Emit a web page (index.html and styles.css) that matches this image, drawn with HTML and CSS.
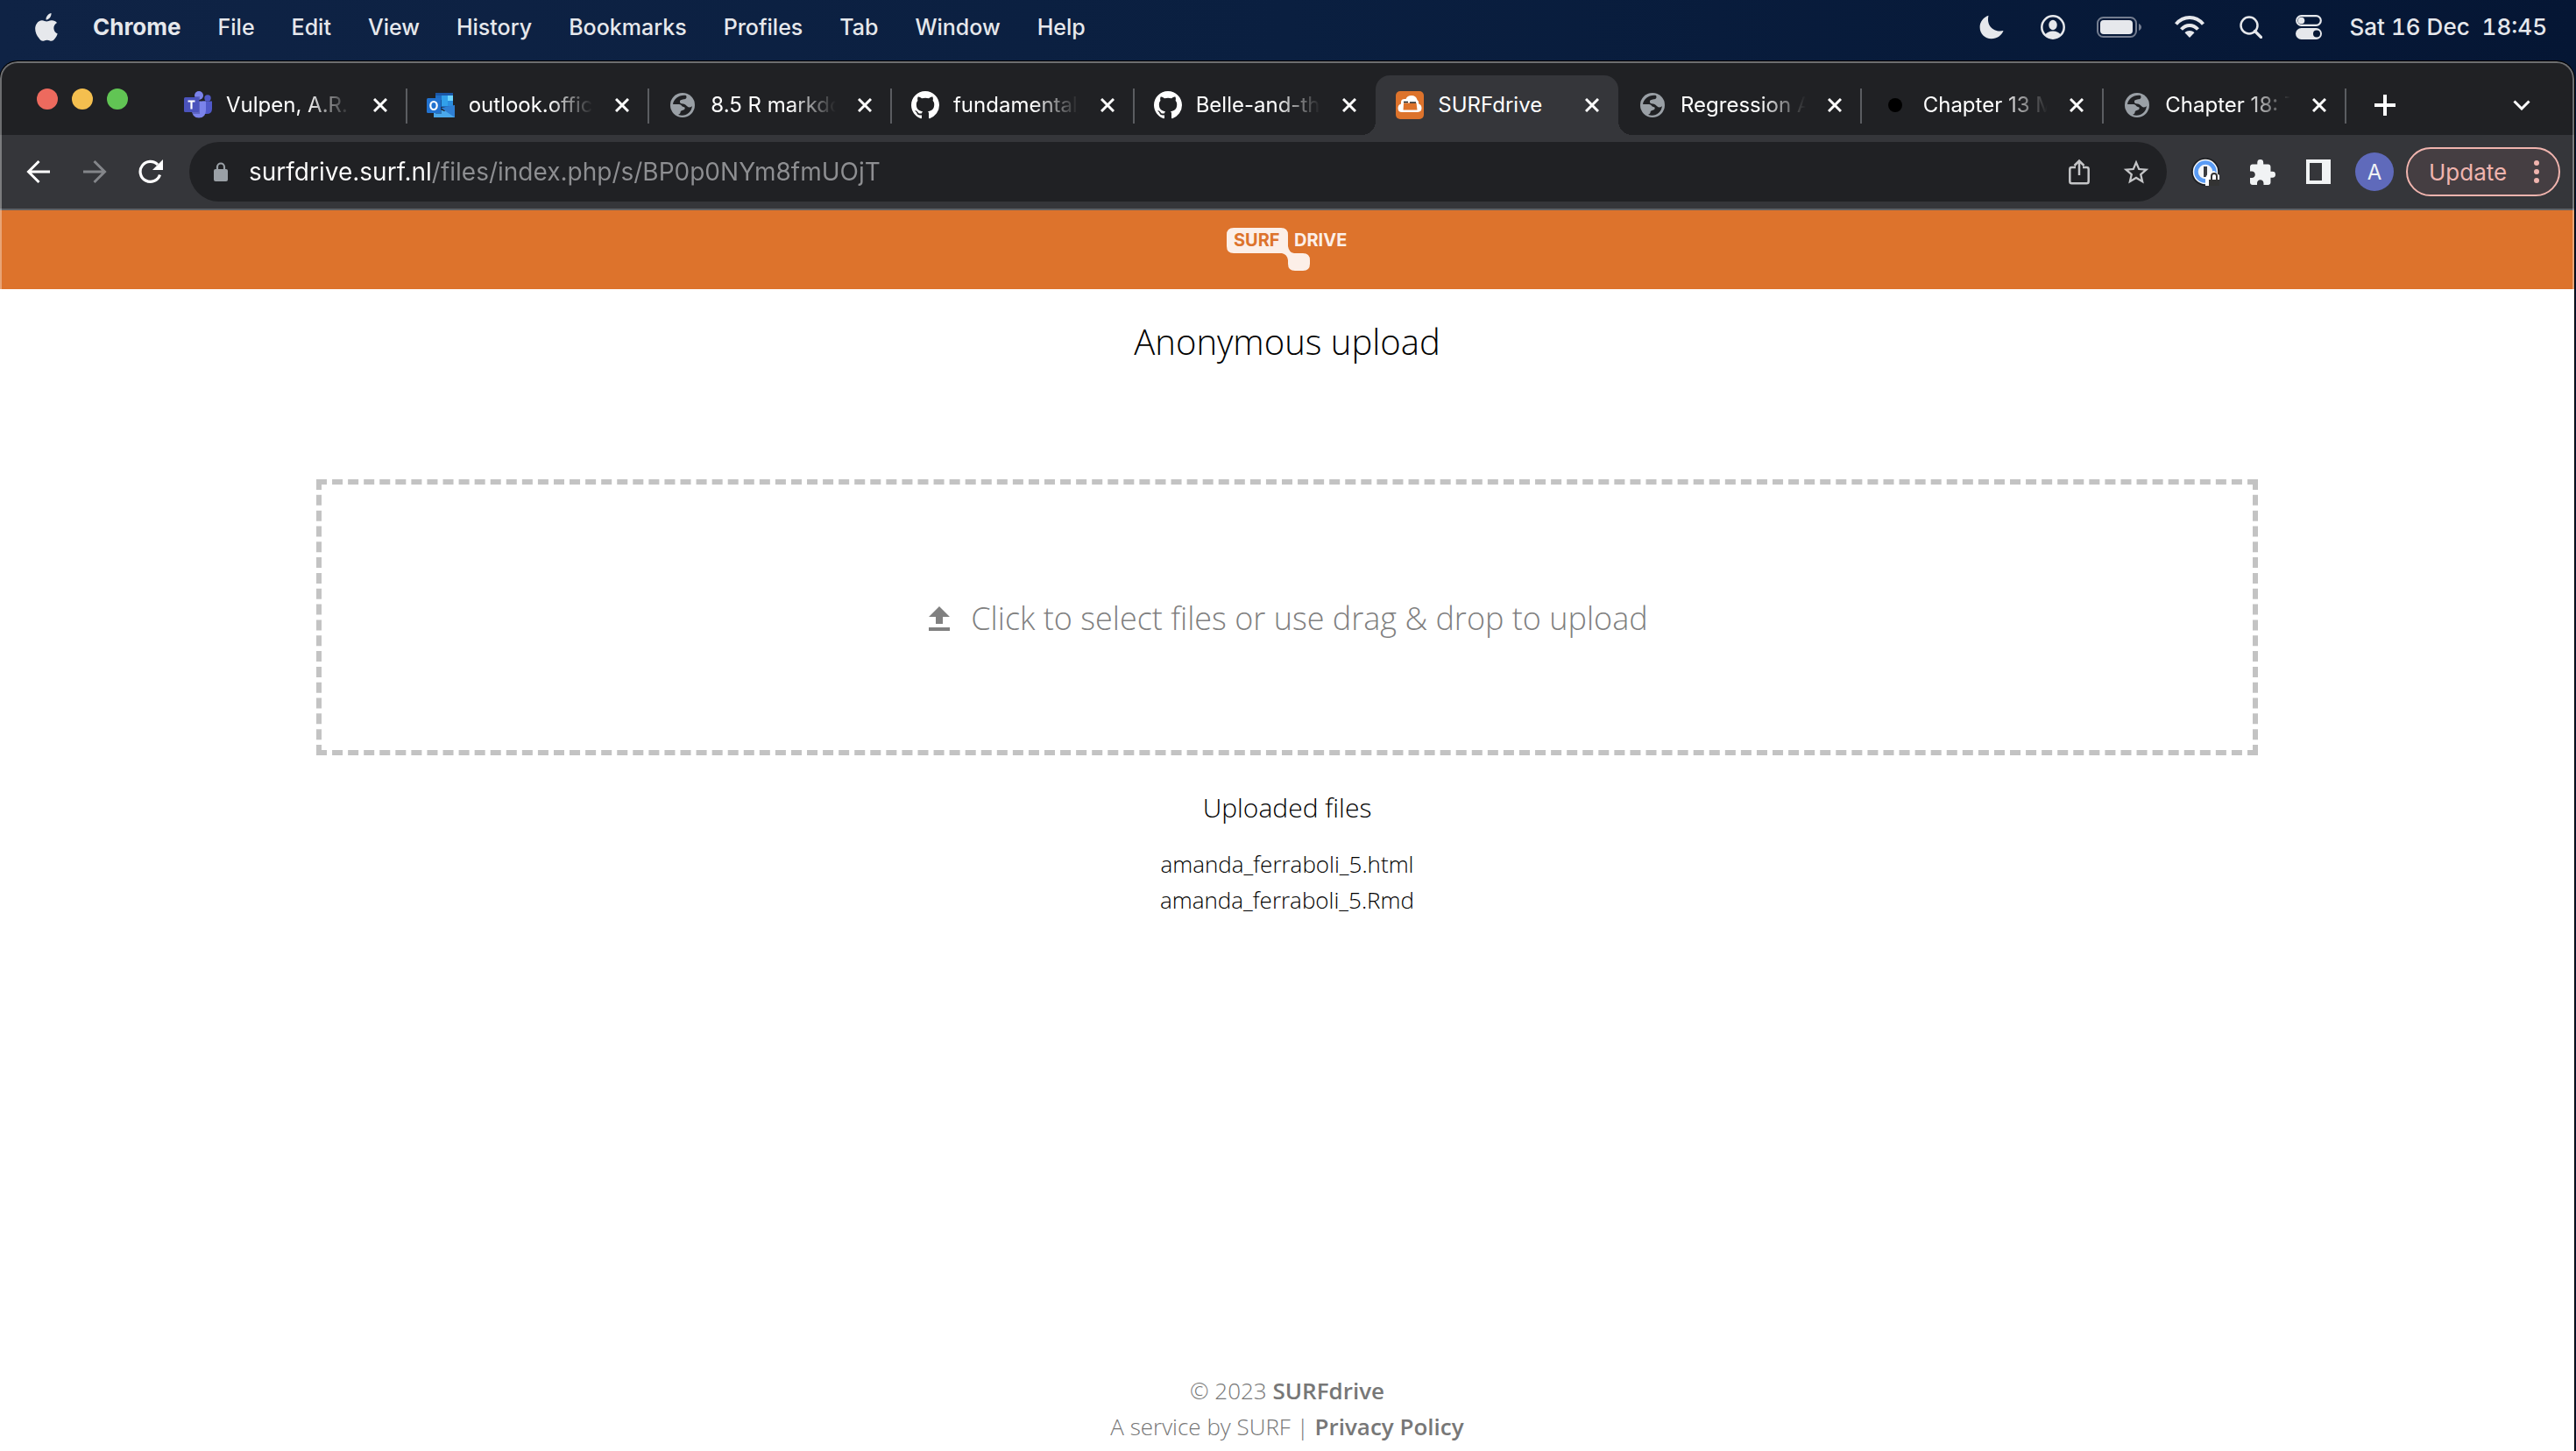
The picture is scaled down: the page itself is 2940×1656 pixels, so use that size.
FILE: index.html
```html
<!DOCTYPE html>
<html lang="en">
<head>
<meta charset="utf-8">
<title>SURFdrive</title>
<link rel="stylesheet" href="styles.css">
</head>
<body>
<svg class="sprite" width="0" height="0" aria-hidden="true">
  <symbol id="close" viewBox="0 0 16 16"><path d="M1 1l14 14M15 1L1 15" stroke="currentColor" stroke-width="3" fill="none"/></symbol>
  <symbol id="globe" viewBox="0 0 28 28"><circle cx="14" cy="14" r="14" fill="#9aa0a6"/><path fill="#202124" d="M18 3C10 2 4 7 3 13h7c3 0 3 3 5 3 2.500 0 2 3 0 3.500-2 .5-3.500 1-3.500 3-.2 1.500-1.500 1.500-2.500 2.500 8 2.500 15-2 16-10-1 1.500-4 2-5.500.5s-3-3-5-3c-2.500 0-4-1-3.500-3S15 7.500 17 7c1.500-.5 2-2.500 1-4z"/></symbol>
  <symbol id="github" viewBox="0 0 16 16"><path fill="#fff" d="M8 0C3.58 0 0 3.58 0 8c0 3.540 2.290 6.530 5.470 7.590.4.070.55-.17.55-.38 0-.19-.01-.82-.01-1.490-2.010.37-2.530-.49-2.690-.94-.09-.23-.48-.94-.82-1.130-.28-.15-.68-.52-.01-.53.63-.01 1.080.58 1.230.82.72 1.210 1.870.87 2.330.66.070-.52.28-.87.51-1.070-1.780-.2-3.640-.89-3.640-3.950 0-.87.31-1.590.82-2.150-.08-.2-.36-1.020.08-2.120 0 0 .67-.21 2.200.82.64-.18 1.320-.27 2-.27s1.360.09 2 .27c1.530-1.040 2.200-.82 2.200-.82.44 1.100.16 1.920.08 2.120.51.56.82 1.270.82 2.150 0 3.070-1.870 3.750-3.650 3.950.29.25.54.73.54 1.480 0 1.070-.01 1.930-.01 2.200 0 .21.15.46.55.38A8.010 8.010 0 0 0 16 8c0-4.420-3.580-8-8-8z"/></symbol>
</svg>

<header class="menubar">
  <svg class="apple" viewBox="0 0 26 32" width="26" height="32"><path fill="currentColor" d="M18.500 0c.2 2.200-.6 4-1.800 5.400-1.200 1.300-2.700 2.200-4.200 2.100-.2-2 .7-3.900 1.800-5.100C15.500 1 17.100.2 18.500 0zM25 11c-2.700 1.700-3.800 4-3.600 6.500.2 2.900 1.800 4.900 4.300 6-.7 2-1.700 3.900-3 5.600-1.100 1.500-2.300 2.700-4.100 2.700-1.900 0-2.500-1.100-4.900-1.100-2.300 0-3.100 1.100-4.900 1.100-1.700 0-3-1.300-4.200-3C.1 23.500-1.300 16.300 1.900 11.900 3.400 9.600 5.700 8.300 8 8.300c2.100 0 3.700 1.300 5.200 1.300 1.400 0 3.300-1.500 6-1.300 2.300.1 4.500 1.100 5.800 2.700z"/></svg>
  <nav class="menus">
    <button class="menu menu-app">Chrome</button>
    <button class="menu">File</button>
    <button class="menu">Edit</button>
    <button class="menu">View</button>
    <button class="menu">History</button>
    <button class="menu">Bookmarks</button>
    <button class="menu">Profiles</button>
    <button class="menu">Tab</button>
    <button class="menu">Window</button>
    <button class="menu">Help</button>
  </nav>
  <div class="status">
    <svg class="moon" viewBox="0 0 28 28" width="28" height="28"><path fill="currentColor" d="M10.500.8C5 2.600.6 7.700.6 14c0 7.400 5.800 13.300 13.200 13.300 6.300 0 11.700-3.600 13.700-9.200-9.900 2.500-20-4.800-17-17.300z"/></svg>
    <svg class="person" viewBox="0 0 28 28" width="28" height="28"><circle cx="14" cy="14" r="12.700" fill="none" stroke="currentColor" stroke-width="2.500"/><ellipse cx="14" cy="11.500" rx="4.700" ry="5.700" fill="currentColor"/><path fill="currentColor" d="M5 23c1.500-3 5-4.500 9-4.500s7.500 1.500 9 4.500c-5 5-13 5-18 0z"/></svg>
    <svg class="battery" viewBox="0 0 52 24" width="52" height="24"><rect x="1" y="1" width="44" height="22" rx="6.500" fill="none" stroke="#747d90" stroke-width="2"/><rect x="4" y="4" width="37" height="16" rx="4" fill="currentColor"/><path d="M48 8c4 1.500 4 6.500 0 8z" fill="#747d90"/></svg>
    <svg class="wifi" viewBox="0 0 34 26" width="34" height="26"><path fill="none" stroke="currentColor" stroke-width="4" d="M1.500 9.500C10-.5 24-.5 32.500 9.500M7.500 15.500c5.500-6 13.500-6 19 0"/><path fill="currentColor" d="M17 25l-5.500-5.700c3-3 8-3 11 0z"/></svg>
    <svg class="search" viewBox="0 0 26 26" width="26" height="26"><circle cx="11" cy="11" r="9.500" fill="none" stroke="currentColor" stroke-width="2.500"/><path d="M17.500 17.500l7 7" stroke="currentColor" stroke-width="3.200" stroke-linecap="round"/></svg>
    <svg class="control" viewBox="0 0 30 28" width="30" height="28"><rect x="1.200" y="1.200" width="27.600" height="10.600" rx="5.300" fill="none" stroke="currentColor" stroke-width="2.200"/><circle cx="6.500" cy="6.500" r="3.800" fill="currentColor"/><rect y="15" width="30" height="13" rx="6.500" fill="currentColor"/><circle cx="24" cy="21.500" r="4" fill="#061734"/></svg>
    <time class="clock">Sat 16 Dec&nbsp; 18:45</time>
  </div>
</header>

<div class="window">
  <div class="tabstrip">
    <div class="lights"><button class="light red" aria-label="Close window"></button><button class="light yellow" aria-label="Minimise"></button><button class="light green" aria-label="Zoom"></button></div>
    <div class="tabs">
      <div class="tab">
        <svg class="favicon" viewBox="0 0 32 32"><circle cx="27" cy="8" r="3.700" fill="#5059c9"/><path d="M21 11.500h11v8.500q0 6-6 6h-5z" fill="#5059c9"/><circle cx="17" cy="5" r="5" fill="#7b83eb"/><path d="M9 11.500h16v10q0 9-8 9t-8-9z" fill="#7b83eb"/><path d="M12 6h6v20h-8z" fill="#3b4093" opacity=".45"/><rect y="7" width="17" height="17" rx="1.500" fill="#4b53bc"/><path d="M4.500 11.500h8M8.500 11v9.500" stroke="#fff" stroke-width="2.200"/></svg>
        <button class="tab-title">Vulpen, A.R.</button>
        <button class="tab-close" aria-label="Close tab"><svg class="close-icon"><use href="#close"/></svg></button>
      </div>
      <div class="tab">
        <svg class="favicon" viewBox="0 0 32 32"><path d="M10 2h20v16H10z" fill="#1f6fc5"/><path d="M10 2h20v3H10z" fill="#1a57a8"/><path d="M17 5h7v6h-7zM17 11h7v6h-7z" fill="#32a0ea"/><path d="M24 5h6v6h-6z" fill="#6cd4ff"/><path d="M24 11h6v6h-6z" fill="#2b8ee0"/><path d="M8 30V17l12 6 12-7v14z" fill="#4aa8ea"/><path d="M16 19l16 11V16z" fill="#2f7fd4"/><path d="M10 26h7V10h-3" fill="#123f78" opacity=".5"/><rect y="8" width="16" height="17" rx="1.500" fill="#2272cf"/><ellipse cx="8" cy="16.500" rx="3.700" ry="4.500" fill="none" stroke="#fff" stroke-width="2.200"/></svg>
        <button class="tab-title">outlook.offic</button>
        <button class="tab-close" aria-label="Close tab"><svg class="close-icon"><use href="#close"/></svg></button>
      </div>
      <div class="tab">
        <svg class="favicon globe"><use href="#globe"/></svg>
        <button class="tab-title">8.5 R markdo</button>
        <button class="tab-close" aria-label="Close tab"><svg class="close-icon"><use href="#close"/></svg></button>
      </div>
      <div class="tab">
        <svg class="favicon"><use href="#github"/></svg>
        <button class="tab-title">fundamental_</button>
        <button class="tab-close" aria-label="Close tab"><svg class="close-icon"><use href="#close"/></svg></button>
      </div>
      <div class="tab no-rule">
        <svg class="favicon"><use href="#github"/></svg>
        <button class="tab-title">Belle-and-th</button>
        <button class="tab-close" aria-label="Close tab"><svg class="close-icon"><use href="#close"/></svg></button>
      </div>
      <div class="tab active no-rule">
        <svg class="favicon" viewBox="0 0 32 32"><rect width="32" height="32" rx="5" fill="#dd732c"/><path fill="#fff" d="M7 24q-4.500 0-4.500-4.500 0-4 3.500-5v-2.200q.3-3.500 4.500-3.300h1q1.500-4 6.500-4t6.500 5q2 1 1.700 4.500 3.300 1 3.300 5T25 24z"/><path fill="#dd732c" d="M9 13.500h14.500l1 8h-16z"/><path d="M9 12.500h5M16 13h7" stroke="#222" stroke-width="1.300"/></svg>
        <button class="tab-title">SURFdrive</button>
        <button class="tab-close" aria-label="Close tab"><svg class="close-icon"><use href="#close"/></svg></button>
      </div>
      <div class="tab">
        <svg class="favicon globe"><use href="#globe"/></svg>
        <button class="tab-title">Regression A</button>
        <button class="tab-close" aria-label="Close tab"><svg class="close-icon"><use href="#close"/></svg></button>
      </div>
      <div class="tab">
        <svg class="favicon" viewBox="0 0 32 32"><circle cx="16" cy="16" r="8" fill="#000"/></svg>
        <button class="tab-title">Chapter 13 M</button>
        <button class="tab-close" aria-label="Close tab"><svg class="close-icon"><use href="#close"/></svg></button>
      </div>
      <div class="tab">
        <svg class="favicon globe"><use href="#globe"/></svg>
        <button class="tab-title">Chapter 18: T</button>
        <button class="tab-close" aria-label="Close tab"><svg class="close-icon"><use href="#close"/></svg></button>
      </div>
    </div>
    <div class="strip-end">
      <button aria-label="New tab"><svg width="24" height="24" viewBox="0 0 24 24"><path d="M12 0v24M0 12h24" stroke="currentColor" stroke-width="4"/></svg></button>
      <button aria-label="Search tabs"><svg width="20" height="12" viewBox="0 0 20 12"><path d="M1.500 1.500L10 10l8.500-8.500" fill="none" stroke="currentColor" stroke-width="3"/></svg></button>
    </div>
  </div>

  <div class="toolbar">
    <div class="nav">
      <button aria-label="Back"><svg width="28" height="28" viewBox="0 0 28 28"><path d="M14.500 2L2.500 14l12 12M2.500 14H27" fill="none" stroke="currentColor" stroke-width="3"/></svg></button>
      <button class="dim" aria-label="Forward"><svg width="28" height="28" viewBox="0 0 28 28"><path d="M13.500 2l12 12-12 12M25.500 14H1" fill="none" stroke="currentColor" stroke-width="3"/></svg></button>
      <button aria-label="Reload"><svg width="28" height="28" viewBox="0 0 28 28"><path d="M24.500 17.500A11.500 11.500 0 1 1 22 6" fill="none" stroke="currentColor" stroke-width="3.200"/><path d="M28 0v12H16z" fill="currentColor"/></svg></button>
    </div>
    <div class="omnibox">
      <svg width="16" height="22" viewBox="0 0 16 22"><rect y="8" width="16" height="14" rx="2" fill="#9aa0a6"/><path d="M4 9V5.500a4 4 0 0 1 8 0V9" fill="none" stroke="#9aa0a6" stroke-width="2.200"/></svg>
      <input class="url" type="text" aria-label="Address" value="surfdrive.surf.nl/files/index.php/s/BP0p0NYm8fmUOjT">
      <button class="soft" aria-label="Share"><svg width="24" height="30" viewBox="0 0 24 30"><path d="M8 10H3.500Q1.300 10 1.300 12.200V26q0 2.300 2.200 2.300h17q2.200 0 2.200-2.300V12.200q0-2.200-2.200-2.200H16M12 19V2.500M6.500 8L12 2.500 17.500 8" fill="none" stroke="currentColor" stroke-width="2.500"/></svg></button>
      <button class="soft" aria-label="Bookmark"><svg width="30" height="30" viewBox="1.500 1.500 21 20"><path fill="currentColor" d="M22 9.240l-7.190-.62L12 2 9.190 8.630 2 9.240l5.460 4.730L5.820 21 12 17.270 18.180 21l-1.630-7.030L22 9.240zM12 15.400l-3.760 2.270 1-4.280-3.320-2.880 4.380-.38L12 6.100l1.710 4.040 4.380.38-3.320 2.880 1 4.280L12 15.400z"/></svg></button>
    </div>
    <div class="tools">
      <button class="password" aria-label="Password manager"><svg width="32" height="32" viewBox="0 0 32 32"><circle cx="16" cy="16" r="16" fill="#1e2024"/><circle cx="16" cy="16" r="14.200" fill="#f4f6f8"/><circle cx="16" cy="16" r="10.500" fill="none" stroke="#5a9cf5" stroke-width="4.500"/><rect x="14" y="10" width="4" height="12" fill="#3a3c40"/><path d="M16 23q3-7 10-8l6 5v12H16z" fill="#fff"/><path d="M20 25h12v7H20z" fill="#333"/><path d="M23 25v-4a3 3 0 0 1 6 0v4" fill="none" stroke="#333" stroke-width="2"/></svg></button>
      <button aria-label="Extensions"><svg width="29" height="29" viewBox="2 1 21 21"><path fill="currentColor" d="M20.500 11H19V7c0-1.100-.9-2-2-2h-4V3.500a2.500 2.500 0 0 0-5 0V5H4c-1.100 0-1.990.9-1.990 2v3.800H3.500c1.490 0 2.700 1.210 2.700 2.700s-1.210 2.700-2.700 2.700H2V20c0 1.100.9 2 2 2h3.800v-1.500c0-1.490 1.210-2.700 2.700-2.700s2.700 1.210 2.700 2.700V22H17c1.100 0 2-.9 2-2v-4h1.500a2.500 2.500 0 0 0 0-5z"/></svg></button>
      <button aria-label="Side panel"><svg width="28" height="28" viewBox="0 0 28 28"><path fill="currentColor" fill-rule="evenodd" d="M0 0h28v28H0zM4 4v20h14V4z"/></svg></button>
      <button class="avatar" aria-label="Profile">A</button>
      <button class="update">Update <svg width="6" height="26" viewBox="0 0 6 26"><circle cx="3" cy="3" r="3" fill="currentColor"/><circle cx="3" cy="13" r="3" fill="currentColor"/><circle cx="3" cy="23" r="3" fill="currentColor"/></svg></button>
    </div>
  </div>

  <div class="page">
    <div class="brand">
      <svg width="138" height="50" viewBox="0 0 138 50" role="img" aria-label="SURF DRIVE"><path fill="#fcefe8" d="M8 0h54q8 0 8 8v13q1 7 7 8h10q8 0 8 8v4q0 8-8 8h-9q-8 0-8-8v-4q-1-7-7-8H8q-8 0-8-8V8q0-8 8-8z"/><text class="logo-text" x="8" y="21" fill="#dd732c">SURF</text><text class="logo-text" x="77" y="21" fill="#fcefe8">DRIVE</text></svg>
    </div>
    <main class="content">
      <h1 class="title">Anonymous upload</h1>
      <label class="dropzone">
        <input type="file" multiple hidden>
        <svg width="24" height="28" viewBox="0 0 24 28"><path fill="currentColor" d="M12 0l12 12h-8v8H8v-8H0zM0 24h24v4H0z"/></svg>
        <span>Click to select files or use drag &amp; drop to upload</span>
      </label>
      <h2 class="subtitle">Uploaded files</h2>
      <ul class="files">
        <li>amanda_ferraboli_5.html</li>
        <li>amanda_ferraboli_5.Rmd</li>
      </ul>
    </main>
    <footer class="footer">
      <p>© 2023 <a href="#">SURFdrive</a></p>
      <p>A service by SURF | <a href="#">Privacy Policy</a></p>
    </footer>
  </div>
</div>
</body>
</html>
```
FILE: styles.css
```css
* { box-sizing: border-box; }
body {
  margin: 0;
  min-height: 100vh;
  display: flex;
  flex-direction: column;
  background: linear-gradient(90deg, #0f2345, #0a1f40 50%, #051634);
  font-family: Inter, "Liberation Sans", sans-serif;
  color: #fff;
}
button {
  margin: 0;
  padding: 0;
  border: 0;
  background: none;
  color: inherit;
  font: inherit;
  white-space: nowrap;
}
svg { display: block; flex: none; }
.sprite { position: absolute; }

/* System menu bar */
.menubar {
  display: flex;
  align-items: center;
  height: 70px;
  padding: 0 33px 8px 40px;
  color: #e6e8ec;
  font-size: 25px;
  line-height: 32px;
}
.menus { display: flex; gap: 42px; margin-left: 40px; font-weight: 500; }
.menu-app { font-size: 26px; font-weight: 700; }
.status { display: flex; align-items: center; margin-left: auto; }
.moon { margin-right: 42px; }
.person { margin-right: 36px; }
.battery { margin-right: 37px; }
.wifi { margin-right: 40px; }
.search { margin-right: 38px; }
.control { margin-right: 32px; }
.clock { font-size: 26px; font-weight: 500; font-variant-numeric: tabular-nums; }

/* Browser window */
.window {
  position: relative;
  flex: 1;
  display: flex;
  flex-direction: column;
  margin-right: 2px;
  border-radius: 20px 20px 0 0;
  box-shadow: 0 0 0 1px #000;
  background: #202124;
  overflow: hidden;
}
.window::after {
  content: "";
  position: absolute;
  inset: 0;
  border: 2px solid rgba(255, 255, 255, .35);
  border-bottom: 0;
  border-radius: 20px 20px 0 0;
  pointer-events: none;
}
.tabstrip { display: flex; height: 84px; padding-top: 16px; }
.lights { display: flex; gap: 16px; width: 187px; padding: 15px 0 0 42px; }
.light { width: 24px; height: 24px; border-radius: 50%; }
.red { background: #ed6a5e; }
.yellow { background: #f4bf4f; }
.green { background: #61c554; }
.tabs { flex: 1; display: grid; grid-template-columns: repeat(9, 1fr); }
.tab {
  position: relative;
  display: flex;
  align-items: center;
  min-width: 0;
  padding: 0 14px 0 23px;
}
.tab::after {
  content: "";
  position: absolute;
  right: -1px;
  top: 15px;
  width: 2px;
  height: 40px;
  background: #5b5d61;
}
.tab.no-rule::after { display: none; }
.favicon { width: 32px; height: 32px; margin-right: 16px; }
.globe { padding: 2px; }
.tab-title {
  flex: 1;
  min-width: 0;
  margin-right: 8px;
  overflow: hidden;
  text-align: left;
  font-size: 24px;
  font-weight: 400;
  line-height: 32px;
  -webkit-mask-image: linear-gradient(90deg, #000 60%, transparent 94%);
  mask-image: linear-gradient(90deg, #000 60%, transparent 94%);
}
.tab-close { padding: 8px; }
.close-icon { width: 16px; height: 16px; }
.active { border-radius: 16px 16px 0 0; background: #35363a; }
.active .tab-title { -webkit-mask-image: none; mask-image: none; }
.active::before {
  content: "";
  position: absolute;
  left: -16px;
  right: -16px;
  bottom: 0;
  height: 16px;
  background:
    radial-gradient(circle at 0 0, transparent 16px, #35363a 16px) 0 0 / 16px 16px no-repeat,
    radial-gradient(circle at 100% 0, transparent 16px, #35363a 16px) 100% 0 / 16px 16px no-repeat;
}
.strip-end {
  display: flex;
  align-items: center;
  justify-content: space-between;
  width: 261px;
  padding: 0 50px 0 33px;
}

/* Toolbar */
.toolbar {
  display: flex;
  align-items: center;
  height: 86px;
  padding: 0 16px 0 30px;
  border-bottom: 2px solid #5f6064;
  background: #35363a;
}
.nav { display: flex; gap: 36px; margin-right: 30px; }
.dim { color: #84868a; }
.omnibox {
  flex: 1;
  display: flex;
  align-items: center;
  height: 68px;
  padding: 0 20px 0 28px;
  border-radius: 34px;
  background: #202124;
}
.url {
  flex: 1;
  min-width: 0;
  margin: 0 24px;
  padding: 0;
  border: 0;
  background: linear-gradient(90deg, #fff 207px, #8e8f92 207px);
  -webkit-background-clip: text;
  background-clip: text;
  color: transparent;
  font: 400 28px/40px Inter, "Liberation Sans", sans-serif;
}
.soft { color: #c4c5c7; }
.soft + .soft { margin-left: 38px; }
.tools { display: flex; align-items: center; color: #f1f3f4; }
.tools > * { margin-left: 35px; }
.tools .password,
.tools .avatar { margin-left: 28px; }
.tools .avatar {
  width: 44px;
  height: 44px;
  border-radius: 50%;
  background: #5f6abb;
  font-size: 24px;
}
.tools .update {
  display: flex;
  align-items: center;
  justify-content: space-between;
  width: 176px;
  height: 56px;
  margin-left: 14px;
  padding: 0 22px 0 24px;
  border: 2px solid #f0b4ae;
  border-radius: 28px;
  background: #453e42;
  color: #f0b4ae;
  font-size: 26px;
}

/* Upload page */
.page {
  flex: 1;
  display: flex;
  flex-direction: column;
  background: #fff;
  color: #000;
  font: 300 26px/41px "Open Sans", sans-serif;
  text-align: center;
}
.brand {
  display: flex;
  justify-content: center;
  height: 90px;
  padding-top: 20px;
  background: #dd732c;
}
.logo-text { font: 700 20px Inter, sans-serif; }
.content { padding: 0 361px; }
.title { margin: 32px 0 129px; font-size: 40px; font-weight: 300; line-height: 56px; }
.dropzone {
  display: flex;
  align-items: center;
  justify-content: center;
  gap: 24px;
  height: 315px;
  padding: 3px 0 0 3px;
  border: 6px dashed #c3c3c3;
  color: #808080;
  font-size: 36px;
  line-height: 56px;
}
.subtitle { margin: 36px 0 20px; font-size: 30px; font-weight: 300; line-height: 48px; }
.files { margin: 0; padding: 0; list-style: none; }
.footer { margin-top: auto; padding-bottom: 7px; color: #777; }
.footer p { margin: 0; }
.footer a { color: inherit; font-weight: 600; text-decoration: none; }
```
